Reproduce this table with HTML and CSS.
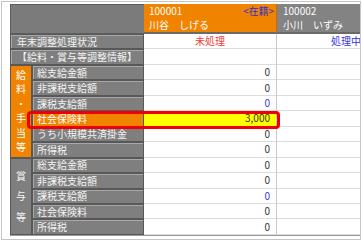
FILE: index.html
```html
<!DOCTYPE html>
<html lang="ja">
<head>
<meta charset="utf-8">
<link rel="stylesheet" href="styles.css">
</head>
<body>
<div class="frame">
  <div class="grid">
    <div class="hd-blank"></div>
    <div class="hd hd-sel">
      <div class="hd-line"><span>100001</span><span class="status">&lt;在籍&gt;</span></div>
      <div class="hd-line"><span>川谷　しげる</span></div>
    </div>
    <div class="hd hd-other">
      <div class="hd-line"><span>100002</span></div>
      <div class="hd-line"><span>小川　いずみ</span></div>
    </div>

    <div class="lbl wide">年末調整処理状況</div>
    <div class="val v1 center red">未処理</div>
    <div class="val v2 blue">処理中</div>

    <div class="lbl wide">【給料・賞与等調整情報】</div>
    <div class="val v1"></div>
    <div class="val v2"></div>

    <div class="grp grp-sel g1"><span>給</span><span>料</span><span>・</span><span>手</span><span>当</span><span>等</span></div>
    <div class="lbl">総支給金額</div>
    <div class="val v1">0</div>
    <div class="val v2"></div>

    <div class="lbl">非課税支給額</div>
    <div class="val v1">0</div>
    <div class="val v2"></div>

    <div class="lbl">課税支給額</div>
    <div class="val v1 blue">0</div>
    <div class="val v2"></div>

    <div class="lbl lbl-sel">社会保険料</div>
    <div class="val v1 val-sel">3,000</div>
    <div class="val v2"></div>

    <div class="lbl">うち小規模共済掛金</div>
    <div class="val v1">0</div>
    <div class="val v2"></div>

    <div class="lbl">所得税</div>
    <div class="val v1">0</div>
    <div class="val v2"></div>

    <div class="grp g2"><span>賞</span><span>与</span><span>等</span></div>
    <div class="lbl">総支給金額</div>
    <div class="val v1">0</div>
    <div class="val v2"></div>

    <div class="lbl">非課税支給額</div>
    <div class="val v1">0</div>
    <div class="val v2"></div>

    <div class="lbl">課税支給額</div>
    <div class="val v1 blue">0</div>
    <div class="val v2"></div>

    <div class="lbl">社会保険料</div>
    <div class="val v1">0</div>
    <div class="val v2"></div>

    <div class="lbl">所得税</div>
    <div class="val v1">0</div>
    <div class="val v2"></div>

    <div class="mark"></div>
  </div>
</div>
</body>
</html>
```
FILE: styles.css
```css
html, body {
  margin: 0;
  padding: 0;
  background: #fff;
}
body {
  font-family: "Noto Sans CJK JP", "Noto Sans", sans-serif;
  font-size: 10px;
}
.frame {
  margin: 1px;
  width: 360px;
  height: 239px;
  box-sizing: border-box;
  border: 1px solid #c4c4c4;
  padding: 2px 0 0 8px;
  overflow: hidden;
}
.grid {
  position: relative;
  display: grid;
  grid-template-columns: 22px 112px 133px 86px;
  grid-template-rows: 30px repeat(13, 15.46px);
  width: 353px;
  border-bottom: 1px solid #9a9a9a;
}
.hd-blank {
  grid-column: 1 / 3;
  background: #7b7b7b;
  border: 1px solid #5e5e5e;
  border-right: none;
}
.hd {
  display: flex;
  flex-direction: column;
  justify-content: center;
  color: #fff;
  line-height: 14px;
  border-bottom: 2px solid #6a6a6a;
}
.hd-sel {
  background: #f08300;
  padding: 0 2px 0 5px;
  border-right: 1px solid #c86e00;
}
.hd-other {
  background: #838383;
  padding: 0 2px 0 6px;
}
.hd-line {
  display: flex;
  justify-content: space-between;
}
.status {
  color: #2f2fd0;
}
.lbl {
  display: flex;
  align-items: center;
  background: #7f7f7f;
  color: #f4f4f4;
  border: 1px solid #585858;
  box-shadow: inset 1px 1px 0 #a8a8a8;
  padding-left: 4px;
  white-space: nowrap;
  line-height: 1;
}
.lbl.wide {
  grid-column: 1 / 3;
  padding-left: 6px;
}
.lbl-sel {
  background: #f08300;
  color: #fff;
  box-shadow: inset 1px 1px 0 #f6b060;
}
.grp {
  display: flex;
  flex-direction: column;
  align-items: center;
  justify-content: center;
  background: #7f7f7f;
  color: #f4f4f4;
  border: 1px solid #585858;
}
.g1 {
  grid-row: span 6;
  line-height: 14.5px;
}
.g2 {
  grid-row: span 5;
  line-height: 20.5px;
}
.grp-sel {
  background: #f08300;
  color: #fff;
}
.val {
  display: flex;
  align-items: center;
  justify-content: flex-end;
  color: #333;
  border-bottom: 1px solid #dcdcdc;
  line-height: 1;
}
.v1 {
  padding-right: 6px;
  border-right: 1px solid #c8c8c8;
}
.v2 {
  padding-right: 2px;
}
.center {
  justify-content: center;
  padding-right: 0;
}
.red {
  color: #f03a3a;
}
.blue {
  color: #3434e6;
}
.val-sel {
  background: #ffff00;
  color: #333;
}
.mark {
  position: absolute;
  left: 17px;
  top: 107px;
  width: 253px;
  height: 18px;
  box-sizing: border-box;
  border: 3px solid #f00000;
  border-radius: 4px;
}
```
